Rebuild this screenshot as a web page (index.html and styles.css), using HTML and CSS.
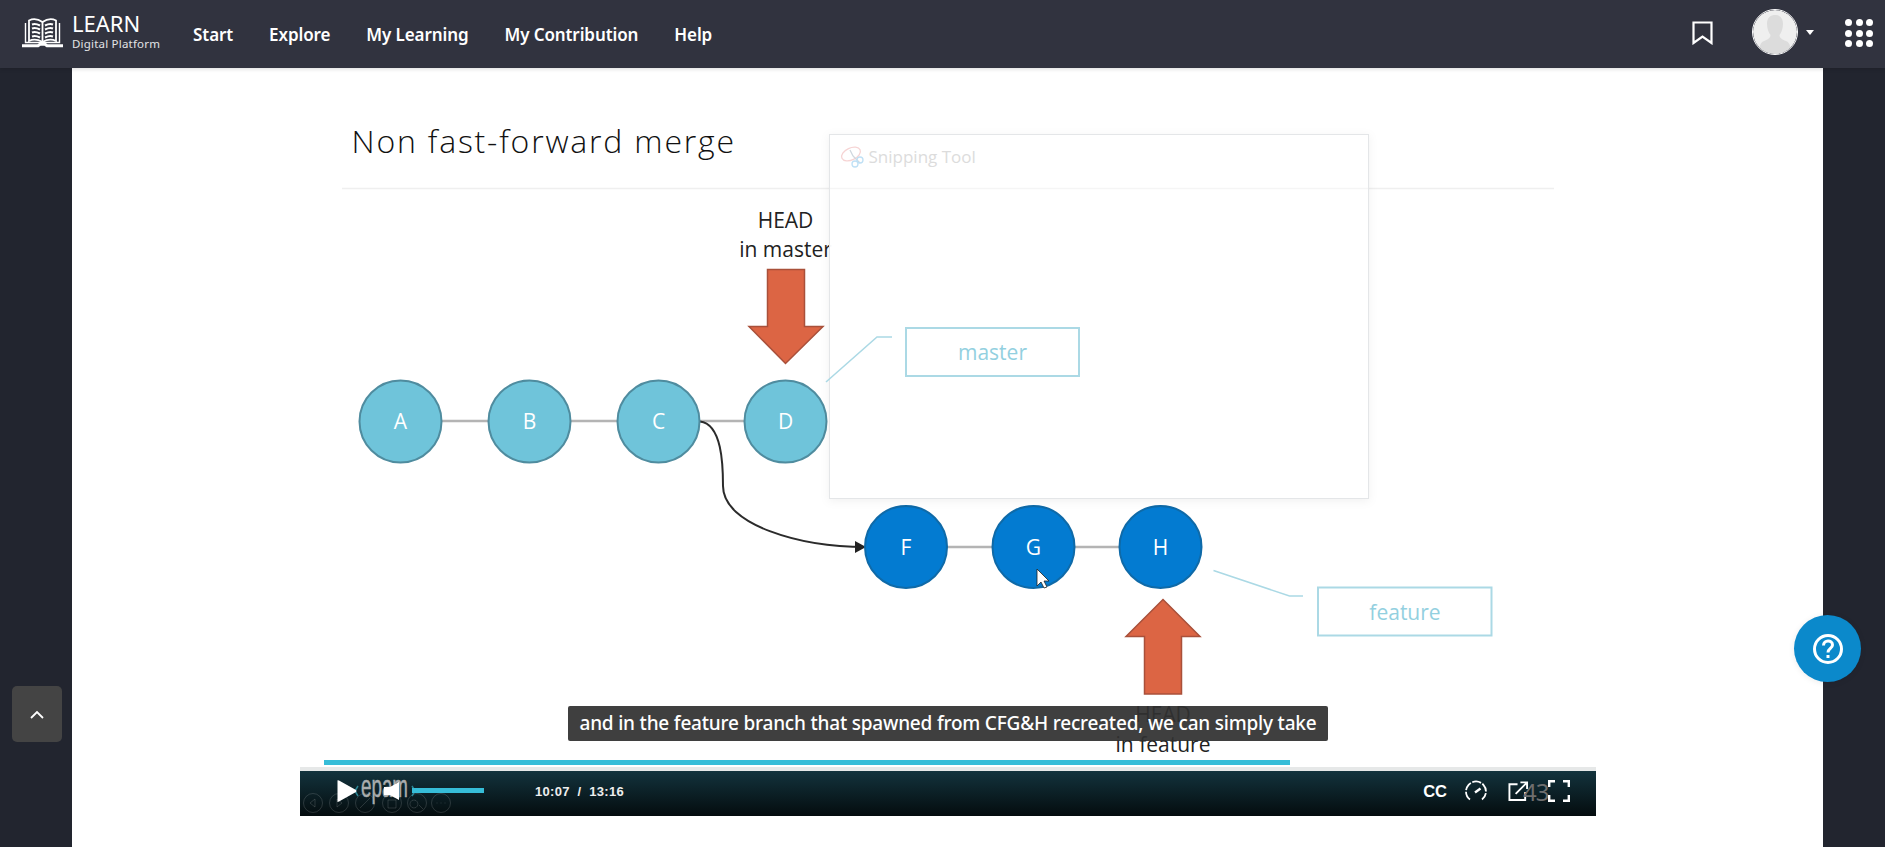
FILE: index.html
```html
<!DOCTYPE html>
<html lang="en">
<head>
  <meta charset="UTF-8" />
  <meta name="viewport" content="width=device-width, initial-scale=1.0"/>
  <title>LEARN - Non fast-forward merge</title>
  <link rel="stylesheet" href="styles.css">
</head>
<body>

  <header class="topbar">
    <a class="brand">
      <svg class="brand-icon" viewBox="0 0 41 30" fill="none" stroke="#fff">
        <path d="M3.500 5 V24.500 H37.500 V5" stroke-width="1.400"/>
        <path d="M7 2.500 C11 0.500 16 1 20.500 4 C25 1 30 0.500 34 2.500 V23 C30 21 25 21.500 20.500 24 C16 21.500 11 21 7 23 Z" stroke-width="1.800"/>
        <path d="M20.500 4 V24" stroke-width="1.800"/>
        <path d="M10 6.500 C12.500 5.500 15 6 18 7.500 M10 10.500 C12.500 9.500 15 10 18 11.500 M10 14.500 C12.500 13.500 15 14 18 15.500 M10 18.500 C12.500 17.500 15 18 18 19.500 M31 6.500 C28.500 5.500 26 6 23 7.500 M31 10.500 C28.500 9.500 26 10 23 11.500 M31 14.500 C28.500 13.500 26 14 23 15.500 M31 18.500 C28.500 17.500 26 18 23 19.500" stroke-width="2"/>
        <path d="M0 27.800 H16 L18 26.300 H23 L25 27.800 H41" stroke-width="3"/>
      </svg>
      <span class="brand-text">
        <span class="brand-name">LEARN</span>
        <span class="brand-sub">Digital Platform</span>
      </span>
    </a>
    <nav class="nav">
      <a>Start</a>
      <a>Explore</a>
      <a>My Learning</a>
      <a>My Contribution</a>
      <a>Help</a>
    </nav>
    <div class="topbar-right">
      <svg class="bookmark" viewBox="0 0 21 24" fill="none" stroke="#fff" stroke-width="2.200">
        <path d="M1.500 1.500 H19.500 V22 L10.500 15.500 L1.500 22 Z"/>
      </svg>
      <div class="avatar">
        <svg viewBox="0 0 44 44">
          <circle cx="22" cy="22" r="22" fill="#efefef"/>
          <path d="M14 14 C14 7 18 5 22 5 C26 5 30 7 30 14 C30 19 28 23 26.500 25 C26.500 28 29 29.500 33 31 C36 32 37 35 37.500 38 C33 42 28 44 22 44 C16 44 11 42 6.500 38 C7 35 8 32 11 31 C15 29.500 17.500 28 17.500 25 C16 23 14 19 14 14 Z" fill="#dcdcdc"/>
        </svg>
      </div>
      <span class="caret"></span>
      <div class="apps">
        <i></i><i></i><i></i><i></i><i></i><i></i><i></i><i></i><i></i>
      </div>
    </div>
  </header>

  <div class="page">
    <aside class="side">
      <button class="to-top">
        <svg viewBox="0 0 14 9" fill="none" stroke="#fff" stroke-width="1.800"><path d="M1 8 L7 2 L13 8"/></svg>
      </button>
    </aside>

    <main class="stage">
      <!-- viewBox uses screen coordinates so the slide can be read off directly -->
      <svg class="slide" viewBox="72 68 1751 779">
        <text class="slide-title" x="351.500" y="153">Non fast-forward merge</text>
        <path class="rule" d="M342 188.500 H1554"/>

        <path class="link" d="M401 421 H785"/>
        <path class="link" d="M906 547 H1160"/>

        <path class="curve" d="M700 421.500 C722 424 723 465 723 486 C723 525 800 547 866 547"/>
        <path class="curve-head" d="M855 541 L866 547 L855 553 Z"/>

        <g class="node">
          <circle cx="400.500" cy="421.500" r="41"/><text x="400.500" y="429">A</text>
          <circle cx="529.500" cy="421.500" r="41"/><text x="529.500" y="429">B</text>
          <circle cx="658.500" cy="421.500" r="41"/><text x="658.500" y="429">C</text>
          <circle cx="785.500" cy="421.500" r="41"/><text x="785.500" y="429">D</text>
        </g>
        <g class="node node-blue">
          <circle cx="906" cy="547" r="41"/><text x="906" y="554.500">F</text>
          <circle cx="1033.500" cy="547" r="41"/><text x="1033.500" y="554.500">G</text>
          <circle cx="1160.500" cy="547" r="41"/><text x="1160.500" y="554.500">H</text>
        </g>

        <text class="head-label" x="785.500" y="228">HEAD</text>
        <text class="head-label" x="785.500" y="257">in master</text>
        <path class="big-arrow" d="M767.500 269.500 H804.500 V326.500 H823 L785.500 363.500 L749 326.500 H767.500 Z"/>

        <path class="big-arrow" d="M1163 599.500 L1200 636.500 H1181.500 V694 H1144.500 V636.500 H1126 Z"/>
        <text class="head-label" x="1163" y="722">HEAD</text>
        <text class="head-label" x="1163" y="752">in feature</text>

        <path class="cursor" d="M1037 569 V586 L1041 582 L1044 588 L1047 587 L1044 581 L1049 581 Z"/>

        <!-- snipping tool window fading out over the slide -->
        <rect class="snip" x="829.500" y="134.500" width="539" height="364"/>
        <path class="snip-rule" d="M830 188.500 H1368"/>
        <g class="snip-icon" fill="none" stroke-width="1.300">
          <ellipse cx="851" cy="154" rx="10" ry="6" stroke="#f6d4d4" transform="rotate(-25 851 154)"/>
          <path d="M853 156 L860 163 M853 156 L850 150" stroke="#cfd8df"/>
          <circle cx="860" cy="160" r="3" stroke="#bfe0f5"/>
          <circle cx="855" cy="164" r="3" stroke="#bfe0f5"/>
        </g>
        <text class="snip-title" x="868.500" y="163">Snipping Tool</text>

        <path class="leader" d="M826 382 L877 337 H892"/>
        <rect class="label-box" x="906" y="328" width="173" height="48"/>
        <text class="label-text" x="992.500" y="360">master</text>

        <path class="leader" d="M1213.500 570.500 L1289.500 596 H1303"/>
        <rect class="label-box" x="1318" y="587.500" width="173.500" height="48"/>
        <text class="label-text" x="1405" y="620">feature</text>
      </svg>

      <div class="caption">and in the feature branch that spawned from CFG&amp;H recreated, we can simply take</div>

      <div class="player">
        <div class="slide-progress"></div>
        <div class="player-line"></div>
        <div class="player-bar">
          <svg class="player-left" viewBox="300 771 200 45">
            <g class="ppt-icons">
              <circle cx="313" cy="803" r="9.500"/>
              <circle cx="339" cy="803" r="9.500"/>
              <circle cx="365" cy="803" r="9.500"/>
              <circle cx="392" cy="803" r="9.500"/>
              <circle cx="417" cy="803" r="9.500"/>
              <circle cx="441" cy="803" r="9.500"/>
              <path d="M315 799 L310 803 L315 807 Z M337 799 L342 803 L337 807 Z M360 808 L370 798 M388 800 H396 V808 H388 Z M414 800 A4 4 0 1 1 413.900 800 M419 805 L423 809 M436.500 803 H437.500 M440.500 803 H441.500 M444.500 803 H445.500"/>
            </g>
            <path class="chevrons" d="M358 786 L355 791 L358 796 M412 786 L415 791 L412 796"/>
            <text class="epam" x="361" y="797" textLength="47" lengthAdjust="spacingAndGlyphs">epam</text>
            <path d="M337.500 781 Q337 780 339 780.500 L356 790 Q357 791 356 792 L339 801.500 Q337 802.500 337.500 801 Z" fill="#fff"/>
            <path d="M384 787 H390 L399 782 V800 L390 795 H384 Z" fill="#fff"/>
            <rect x="412" y="788" width="72" height="5" fill="#36bdd8"/>
          </svg>
          <span class="time">10:07 &nbsp;/ &nbsp;13:16</span>
          <div class="player-right">
            <span class="cc">CC</span>
            <svg class="gauge" viewBox="0 0 22 22" fill="none" stroke="#fff" stroke-width="1.800">
              <path d="M5 19.500 A10 10 0 1 1 17 19.500" stroke-dasharray="9 1.500"/>
              <path d="M10 12.500 L15.500 8.500" stroke-width="2.400"/>
            </svg>
            <svg class="share" viewBox="0 0 22 22" fill="none" stroke="#fff" stroke-width="2">
              <path d="M10 4 H1.500 V20.500 H18 V12"/>
              <path d="M8 14 L19 3 M13 2 H20 V9"/>
            </svg>
            <span class="page-num">43</span>
            <svg class="fullscreen" viewBox="0 0 22 22" fill="none" stroke="#fff" stroke-width="2.400">
              <path d="M1.200 7 V1.200 H7 M15 1.200 H20.800 V7 M20.800 15 V20.800 H15 M7 20.800 H1.200 V15"/>
            </svg>
          </div>
        </div>
      </div>
    </main>

    <aside class="side"></aside>
  </div>

  <button class="help">
    <svg viewBox="0 0 32 32" fill="none" stroke="#fff" stroke-width="3">
      <circle cx="16" cy="16" r="13.500"/>
      <path d="M11.500 12.500 C11.500 6.500 20.500 6.500 20.500 12 C20.500 15.500 16 15.500 16 19.500"/>
      <path d="M16 22 V25"/>
    </svg>
  </button>

</body>
</html>
```

FILE: styles.css
```css
* {
  box-sizing: border-box;
}

html, body {
  height: 100%;
}

body {
  margin: 0;
  font-family: "Noto Sans", Arial, sans-serif;
  background: #22252f;
  display: flex;
  flex-direction: column;
  overflow: hidden;
}

/* top navigation */
.topbar {
  height: 68px;
  flex: none;
  background: #31333f;
  color: #fff;
  display: flex;
  align-items: center;
  padding: 0 12px 0 22px;
  position: relative;
  z-index: 2;
  box-shadow: 0 1px 4px rgba(0,0,0,0.15);
}

.brand {
  display: flex;
  align-items: center;
  gap: 9px;
}

.brand-icon {
  width: 41px;
  height: 30px;
  margin-top: -2px;
}

.brand-text {
  display: flex;
  flex-direction: column;
  margin-top: -6px;
}

.brand-name {
  font-size: 22px;
  line-height: 25px;
}

.brand-sub {
  font-size: 11.500px;
  line-height: 16px;
  letter-spacing: 0.2px;
  color: #e2e3e6;
}

.nav {
  display: flex;
  gap: 36px;
  margin-left: 33px;
}

.nav a {
  font-size: 17px;
  font-weight: 600;
  letter-spacing: -0.1px;
}

.topbar-right {
  margin-left: auto;
  display: flex;
  align-items: center;
}

.bookmark {
  width: 21px;
  height: 24px;
  margin-top: -3px;
  margin-right: 39px;
}

.avatar {
  width: 46px;
  height: 46px;
  border: 1px solid #fff;
  border-radius: 50%;
  overflow: hidden;
  margin-top: -4px;
}

.avatar svg {
  display: block;
  width: 100%;
  height: 100%;
}

.caret {
  width: 0;
  height: 0;
  border-left: 4.500px solid transparent;
  border-right: 4.500px solid transparent;
  border-top: 5px solid #fff;
  margin: -3px 31px 0 8px;
}

.apps {
  display: grid;
  grid-template-columns: repeat(3, 7px);
  gap: 3.500px;
  margin-top: -2px;
}

.apps i {
  width: 7px;
  height: 7px;
  border-radius: 50%;
  background: #fff;
}

/* page body */
.page {
  flex: 1;
  display: flex;
  min-height: 0;
}

.side {
  width: 72px;
  flex: none;
  background: #22252f;
  position: relative;
}

.side:last-child {
  width: 62px;
}

.to-top {
  position: absolute;
  left: 12px;
  top: 618px;
  width: 50px;
  height: 56px;
  border: none;
  border-radius: 5px;
  background: #444;
  padding: 0;
  display: flex;
  align-items: center;
  justify-content: center;
}

.to-top svg {
  width: 14px;
  height: 9px;
  margin-top: 1px;
}

.stage {
  flex: 1;
  background: #fff;
  position: relative;
}

.slide {
  position: absolute;
  left: 0;
  top: 0;
  width: 1751px;
  height: 779px;
}

.slide text {
  font-family: "Open Sans", "Noto Sans", sans-serif;
}

.slide .slide-title {
  font-size: 32px;
  font-weight: 300;
  letter-spacing: 1.800px;
  fill: #111;
}

.rule {
  stroke: #efefef;
  stroke-width: 1.500;
}

.link {
  stroke: #b4b4b4;
  stroke-width: 2.500;
}

.curve {
  fill: none;
  stroke: #2b2b2b;
  stroke-width: 2;
}

.curve-head {
  fill: #222;
}

.node circle {
  fill: #6fc4da;
  stroke: #4f8c9f;
  stroke-width: 2;
}

.node-blue circle {
  fill: #037bd1;
  stroke: #0f6aa8;
}

.slide .node text {
  font-size: 21px;
  fill: #fff;
  text-anchor: middle;
}

.slide .head-label {
  font-size: 21px;
  fill: #222;
  text-anchor: middle;
}

.big-arrow {
  fill: #dc6544;
  stroke: #a9503a;
  stroke-width: 1.500;
}

.cursor {
  fill: #fff;
  stroke: #222;
  stroke-width: 0.800;
}

.snip {
  fill: rgba(255,255,255,0.965);
  stroke: #e4e6e8;
  stroke-width: 1;
  filter: drop-shadow(0 2px 5px rgba(0,0,0,0.06));
}

.snip-rule {
  stroke: #f5f5f5;
  stroke-width: 1.500;
}

.slide .snip-title {
  font-size: 17px;
  fill: #dcdcdc;
}

.leader {
  fill: none;
  stroke: #abd9e5;
  stroke-width: 1.500;
}

.label-box {
  fill: none;
  stroke: #abd9e5;
  stroke-width: 2;
}

.slide .label-text {
  font-size: 21px;
  fill: #93d0e0;
  text-anchor: middle;
}

/* subtitle */
.caption {
  position: absolute;
  left: 496px;
  top: 638px;
  width: 760px;
  height: 35px;
  background: rgba(48,48,48,0.93);
  border-radius: 2px;
  color: #fff;
  font-size: 19px;
  font-weight: 500;
  line-height: 34px;
  text-align: center;
  white-space: nowrap;
  letter-spacing: -0.2px;
}

/* video player */
.player {
  position: absolute;
  left: 228px;
  top: 692px;
  width: 1296px;
}

.slide-progress {
  width: 966px;
  height: 5px;
  margin-left: 24px;
  background: #36bdd8;
}

.player-line {
  height: 6px;
  border-bottom: 4px solid #e6e8e8;
}

.player-bar {
  height: 45px;
  background: linear-gradient(#13333d, #040c0e);
  display: flex;
  align-items: flex-start;
}

.player-left {
  width: 200px;
  height: 45px;
  flex: none;
  overflow: visible;
}

.ppt-icons {
  fill: none;
  stroke: rgba(255,255,255,0.14);
  stroke-width: 1;
}

.chevrons {
  fill: none;
  stroke: #2b8594;
  stroke-width: 1.500;
}

.epam {
  font-family: "Liberation Sans", sans-serif;
  font-size: 32px;
  fill: #a9adae;
  stroke: #a9adae;
  stroke-width: 0.500;
}

.time {
  margin-left: 35px;
  margin-top: 13px;
  color: #eee;
  font-family: "Liberation Sans", Arial, sans-serif;
  font-size: 13px;
  font-weight: 700;
  line-height: 16px;
  letter-spacing: 0.3px;
  white-space: nowrap;
}

.player-right {
  margin-left: auto;
  margin-right: 26px;
  display: flex;
  align-items: center;
  height: 40px;
}

.cc {
  color: #fff;
  font-family: "Liberation Sans", Arial, sans-serif;
  font-size: 16.500px;
  font-weight: 700;
  margin-right: 18px;
}

.gauge {
  width: 22px;
  height: 22px;
  margin-right: 21px;
}

.share {
  width: 21px;
  height: 22px;
}

.page-num {
  color: #6e6e6e;
  font-size: 24px;
  letter-spacing: -1px;
  margin-left: -6px;
  width: 25px;
}

.fullscreen {
  width: 22px;
  height: 22px;
}

/* floating help button */
.help {
  position: fixed;
  left: 1794px;
  top: 615px;
  width: 67px;
  height: 67px;
  border: none;
  border-radius: 50%;
  background: #0b89cb;
  padding: 0;
  display: flex;
  align-items: center;
  justify-content: center;
  box-shadow: 0 1px 6px rgba(0,0,0,0.08);
}

.help svg {
  width: 32px;
  height: 32px;
}
```
